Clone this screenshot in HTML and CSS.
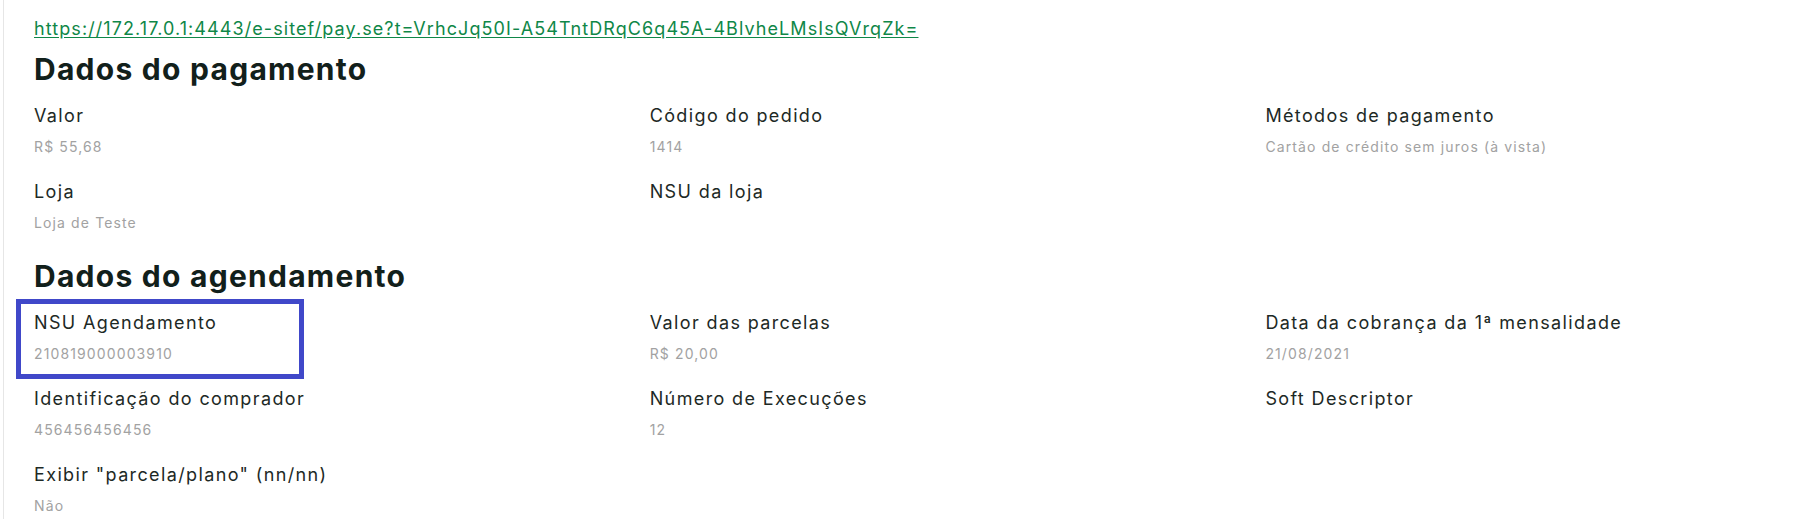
FILE: index.html
```html
<!DOCTYPE html>
<html lang="pt-BR">
<head>
<meta charset="utf-8">
<title>Dados do pagamento</title>
<link rel="stylesheet" href="styles.css">
</head>
<body>
<main class="page">
  <a class="pay-link" href="#">https://172.17.0.1:4443/e-sitef/pay.se?t=VrhcJq50I-A54TntDRqC6q45A-4BlvheLMsIsQVrqZk=</a>

  <section class="section">
    <h2 class="section-title">Dados do pagamento</h2>
    <div class="fields">
      <div class="field"><div class="label">Valor</div><div class="value">R$ 55,68</div></div>
      <div class="field"><div class="label">Código do pedido</div><div class="value">1414</div></div>
      <div class="field"><div class="label">Métodos de pagamento</div><div class="value">Cartão de crédito sem juros (à vista)</div></div>
      <div class="field"><div class="label">Loja</div><div class="value">Loja de Teste</div></div>
      <div class="field"><div class="label">NSU da loja</div><div class="value"></div></div>
    </div>
  </section>

  <section class="section second">
    <h2 class="section-title">Dados do agendamento</h2>
    <div class="fields">
      <div class="field highlighted"><div class="label">NSU Agendamento</div><div class="value">210819000003910</div></div>
      <div class="field"><div class="label">Valor das parcelas</div><div class="value">R$ 20,00</div></div>
      <div class="field"><div class="label">Data da cobrança da 1ª mensalidade</div><div class="value">21/08/2021</div></div>
      <div class="field"><div class="label">Identificação do comprador</div><div class="value">456456456456</div></div>
      <div class="field"><div class="label">Número de Execuções</div><div class="value">12</div></div>
      <div class="field"><div class="label">Soft Descriptor</div><div class="value"></div></div>
      <div class="field"><div class="label">Exibir "parcela/plano" (nn/nn)</div><div class="value">Não</div></div>
    </div>
  </section>
</main>
</body>
</html>
```

FILE: styles.css
```css
html, body {
  margin: 0;
  padding: 0;
  background: #ffffff;
}

body {
  font-family: Inter, "Open Sans", "Liberation Sans", sans-serif;
  overflow: hidden;
}

.page {
  margin-left: 3px;
  border-left: 1px solid #e6e6e6;
  padding: 17px 0 0 30px;
  min-height: 519px;
  box-sizing: border-box;
}

.pay-link {
  display: block;
  font-size: 18px;
  line-height: 24px;
  letter-spacing: 1.08px;
  color: #0f8748;
  text-decoration: underline;
  text-underline-offset: 2px;
  width: max-content;
}

.section-title {
  margin: 8px 0 15px 0;
  font-size: 30px;
  line-height: 40px;
  font-weight: 700;
  letter-spacing: 1.26px;
  color: #12201b;
}

.second .section-title {
  margin-top: 23px;
}

.fields {
  display: grid;
  grid-template-columns: 615.7px 615.7px 1fr;
  row-gap: 23px;
}

.field {
  position: relative;
}

.label {
  font-size: 18px;
  line-height: 24px;
  letter-spacing: 1.37px;
  color: #1d2925;
}

.value {
  margin-top: 9px;
  font-size: 14px;
  line-height: 20px;
  letter-spacing: 1.12px;
  min-height: 20px;
  color: #a2a2a2;
}

.highlighted::after {
  content: "";
  position: absolute;
  left: -18px;
  top: -12px;
  width: 288px;
  height: 80px;
  border: 5px solid #4048c9;
  box-sizing: border-box;
}
```
